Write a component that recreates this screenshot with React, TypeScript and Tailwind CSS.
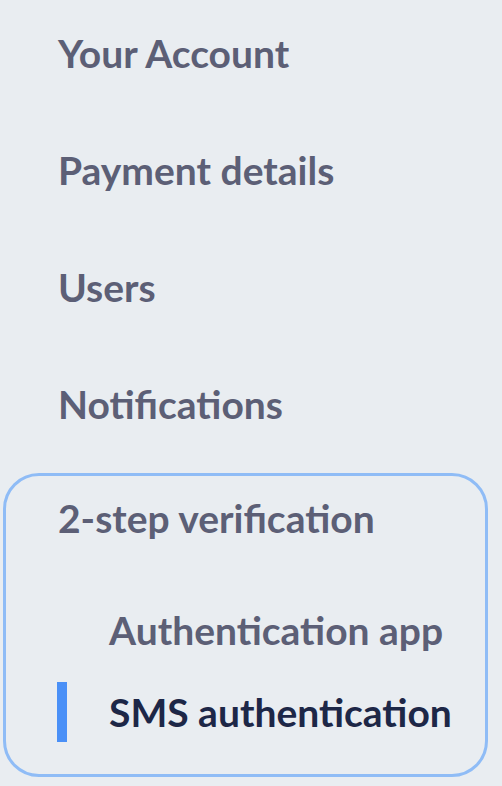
const topItems = ["Your Account", "Payment details", "Users", "Notifications"];

const subItems = [
  { label: "Authentication app", active: false },
  { label: "SMS authentication", active: true },
];

export default function App() {
  return (
    <div
      className="min-h-[786px] w-full bg-[#e9edf1] pl-[3px] pr-[14px]"
      style={{ fontFamily: "Lato, 'Noto Sans', sans-serif" }}
    >
      <nav className="flex flex-col">
        {topItems.map((item) => (
          <a
            key={item}
            className="mb-[10px] block pl-[55px] text-[39px] font-bold leading-[107px] text-[#5c5f76]"
          >
            {item}
          </a>
        ))}

        <div className="mt-[5px] rounded-[36px] border-[3px] border-[#8fbcf6] pt-[18px] pb-[32px]">
          <div className="pl-[52px] text-[39px] font-bold leading-[48px] text-[#5c5f76]">2-step verification</div>
          <div className="mt-[58px] flex flex-col gap-[22px]">
            {subItems.map((s) => (
              <div key={s.label} className="flex h-[60px] items-center pl-[51px]">
                <span className={`h-[60px] w-[10px] ${s.active ? "bg-[#4a90f7]" : "bg-transparent"}`} />
                <span
                  className={`ml-[42px] text-[39px] font-bold leading-[48px] ${
                    s.active ? "text-[#1d2747]" : "text-[#5c5f76]"
                  }`}
                >
                  {s.label}
                </span>
              </div>
            ))}
          </div>
        </div>
      </nav>
    </div>
  );
}
